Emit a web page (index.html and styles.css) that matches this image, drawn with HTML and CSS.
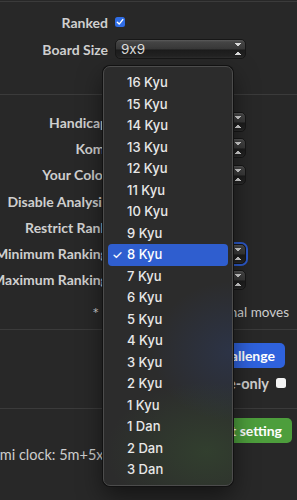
FILE: index.html
```html
<!DOCTYPE html>
<html lang="en">
<head>
    <meta charset="UTF-8">
    <meta name="viewport" content="width=device-width, initial-scale=1.0">
    <title>Challenge Settings</title>
    <link rel="stylesheet" href="styles.css">
</head>
<body>
    <div class="panel">
        <!-- Basic settings -->
        <section class="group group-top">
            <div class="row">
                <span class="label">Ranked</span>
                <span class="check checked">
                    <svg width="8" height="8" viewBox="0 0 8 8"><path d="M1.3 4.2 L3.2 6.1 L6.8 1.6" fill="none" stroke="#fff" stroke-width="1.4" stroke-linecap="round" stroke-linejoin="round"/></svg>
                </span>
            </div>
            <div class="row">
                <span class="label">Board Size</span>
                <div class="select"><span class="value">9x9</span><span class="arrows"></span></div>
            </div>
        </section>

        <!-- Rules -->
        <section class="group group-rules">
            <div class="row">
                <span class="label">Handicap</span>
                <div class="select"><span class="value">None</span><span class="arrows"></span></div>
            </div>
            <div class="row">
                <span class="label">Komi</span>
                <div class="select"><span class="value">Automatic</span><span class="arrows"></span></div>
            </div>
            <div class="row">
                <span class="label">Your Color</span>
                <div class="select"><span class="value">Automatic</span><span class="arrows"></span></div>
            </div>
            <div class="row">
                <span class="label">Disable Analysis</span>
                <span class="check"></span>
            </div>
            <div class="row">
                <span class="label">Restrict Rank</span>
                <span class="check"></span>
            </div>
            <div class="row">
                <span class="label">Minimum Ranking</span>
                <div class="select focused"><span class="value">8 Kyu</span><span class="arrows"></span></div>
            </div>
            <div class="row">
                <span class="label">Maximum Ranking</span>
                <div class="select"><span class="value">1 Dan</span><span class="arrows"></span></div>
            </div>
            <p class="note"><span class="star">*</span><span>Handicap as additional moves</span></p>
        </section>

        <!-- Actions -->
        <section class="group group-actions">
            <div class="action-row">
                <button class="btn btn-blue" type="button">Send Challenge</button>
            </div>
            <div class="action-row option-row">
                <span class="option-label">Invite-only</span>
                <span class="check white"></span>
            </div>
        </section>

        <!-- Clock -->
        <section class="group group-clock">
            <div class="action-row">
                <button class="btn btn-green" type="button">Default setting</button>
            </div>
            <p class="clock">Byo-Yomi clock: 5m+5x 30s</p>
        </section>

        <!-- Open rank menu -->
        <ul class="menu">
            <li>16 Kyu</li>
            <li>15 Kyu</li>
            <li>14 Kyu</li>
            <li>13 Kyu</li>
            <li>12 Kyu</li>
            <li>11 Kyu</li>
            <li>10 Kyu</li>
            <li>9 Kyu</li>
            <li class="selected">8 Kyu</li>
            <li>7 Kyu</li>
            <li>6 Kyu</li>
            <li>5 Kyu</li>
            <li>4 Kyu</li>
            <li>3 Kyu</li>
            <li>2 Kyu</li>
            <li>1 Kyu</li>
            <li>1 Dan</li>
            <li>2 Dan</li>
            <li>3 Dan</li>
        </ul>
    </div>
</body>
</html>
```

FILE: styles.css
```css
body {
    margin: 0;
    background-color: #282828; /* dark window background */
    font-family: "Lato", "Noto Sans", sans-serif;
    color: #cdcdcd;
    overflow: hidden;
}
.panel {
    position: relative;
    height: 500px;
}
.group {
    border-top: 1px solid #3b3b3b;
}
.group-top {
    margin-top: 1px;
    padding: 10px 0 35px;
}
.group-rules {
    padding: 14px 0 7px;
}
.group-actions {
    padding: 13px 0 16px;
}
.group-clock {
    padding: 9px 0 0;
}
.row {
    display: flex;
    align-items: center;
    height: 20px;
}
.row + .row {
    margin-top: 7px;
}
.group-rules .row {
    height: 26.3px;
    margin-top: 0;
}
.label {
    width: 108px;
    flex-shrink: 0;
    display: flex;
    justify-content: flex-end; /* long labels run off the left edge */
    white-space: nowrap;
    margin-right: 7px;
    font-size: 14px;
    font-weight: 700;
    color: #cfcfcf;
}
.check {
    width: 10px;
    height: 10px;
    border-radius: 2.5px;
    background-color: #3a3a3a;
    display: flex;
    align-items: center;
    justify-content: center;
}
.check.checked {
    background-color: #2f6de6;
}
.check.white {
    background-color: #f4f4f4;
}
.select {
    position: relative;
    width: 131px;
    height: 20px;
    box-sizing: border-box;
    border-radius: 5px;
    border: 1px solid #171717;
    background: linear-gradient(#5b5b5b 0, #444 2px, #383838 50%, #1c1c1c 55%, #232323 90%, #2e2e2e 100%);
    display: flex;
    align-items: center;
}
.select.focused {
    box-shadow: 0 0 0 2px #2c59c9;
}
.value {
    padding-left: 5px;
    font-family: "Inter", "Noto Sans", sans-serif;
    font-size: 13.5px;
    font-feature-settings: "calt" 0; /* keep a plain x in 9x9 */
    color: #dcdcdc;
}
.arrows {
    position: absolute;
    right: 4px;
    top: 3px;
    width: 6px;
    height: 12px;
    background:
        linear-gradient(to top right, transparent 50%, #d8d8d8 50%) left 0 top 0 / 3px 4px no-repeat,
        linear-gradient(to top left, transparent 50%, #d8d8d8 50%) right 0 top 0 / 3px 4px no-repeat,
        linear-gradient(to bottom right, transparent 50%, #d8d8d8 50%) left 0 bottom 0 / 3px 4px no-repeat,
        linear-gradient(to bottom left, transparent 50%, #d8d8d8 50%) right 0 bottom 0 / 3px 4px no-repeat;
}
.note {
    display: flex;
    align-items: center;
    justify-content: space-between;
    height: 20px;
    margin: 9px 0 0;
    padding: 0 8px 0 93px;
    font-size: 13.5px;
    white-space: nowrap;
}
.star {
    color: #d6d6d6;
    font-family: "DejaVu Sans", sans-serif;
    font-size: 11px;
}
.action-row {
    display: flex;
    justify-content: flex-end;
    align-items: center;
}
.btn {
    height: 25px;
    border: none;
    border-radius: 5px;
    padding: 0 10px;
    color: #fff;
    font-family: "Lato", "Noto Sans", sans-serif;
    font-size: 14px;
    font-weight: 700;
}
.btn-blue {
    background-color: #2f62dd;
    margin-right: 12px;
}
.btn-green {
    background-color: #4d9e3c;
    margin-right: 5px;
}
.option-row {
    height: 18px;
    margin-top: 6px;
    padding-right: 11px;
}
.option-label {
    margin-right: 7px;
    font-size: 14.5px;
    font-weight: 700;
}
.clock {
    margin: 3px 0 0 -45px;
    line-height: 18px;
    font-size: 14.5px;
    white-space: nowrap;
}
.menu {
    position: absolute;
    left: 103px;
    top: 65px;
    width: 130px;
    box-sizing: border-box;
    margin: 0;
    padding: 5px 4px 4px;
    list-style: none;
    border: 1px solid #4c4c4c;
    border-radius: 7px;
    box-shadow: 0 0 0 1px #121212, 0 10px 24px rgba(0, 0, 0, 0.5);
    background:
        radial-gradient(ellipse 80px 70px at 100% 68%, rgba(45, 85, 190, 0.18), transparent),
        radial-gradient(ellipse 100px 70px at 80% 92%, rgba(70, 130, 55, 0.22), transparent),
        #2c2c2c;
    font-family: "Inter", "Noto Sans", sans-serif;
    font-size: 13px;
    font-weight: 500;
    color: #e8e8e8;
}
.menu li {
    position: relative;
    height: 21.5px;
    line-height: 21.5px;
    padding-left: 19px;
    border-radius: 4px;
}
.menu li.selected {
    background-color: #2f5ecf;
    color: #fff;
}
.menu li.selected::before {
    content: "\2713";
    position: absolute;
    left: 4px;
    font-size: 12px;
}
```
